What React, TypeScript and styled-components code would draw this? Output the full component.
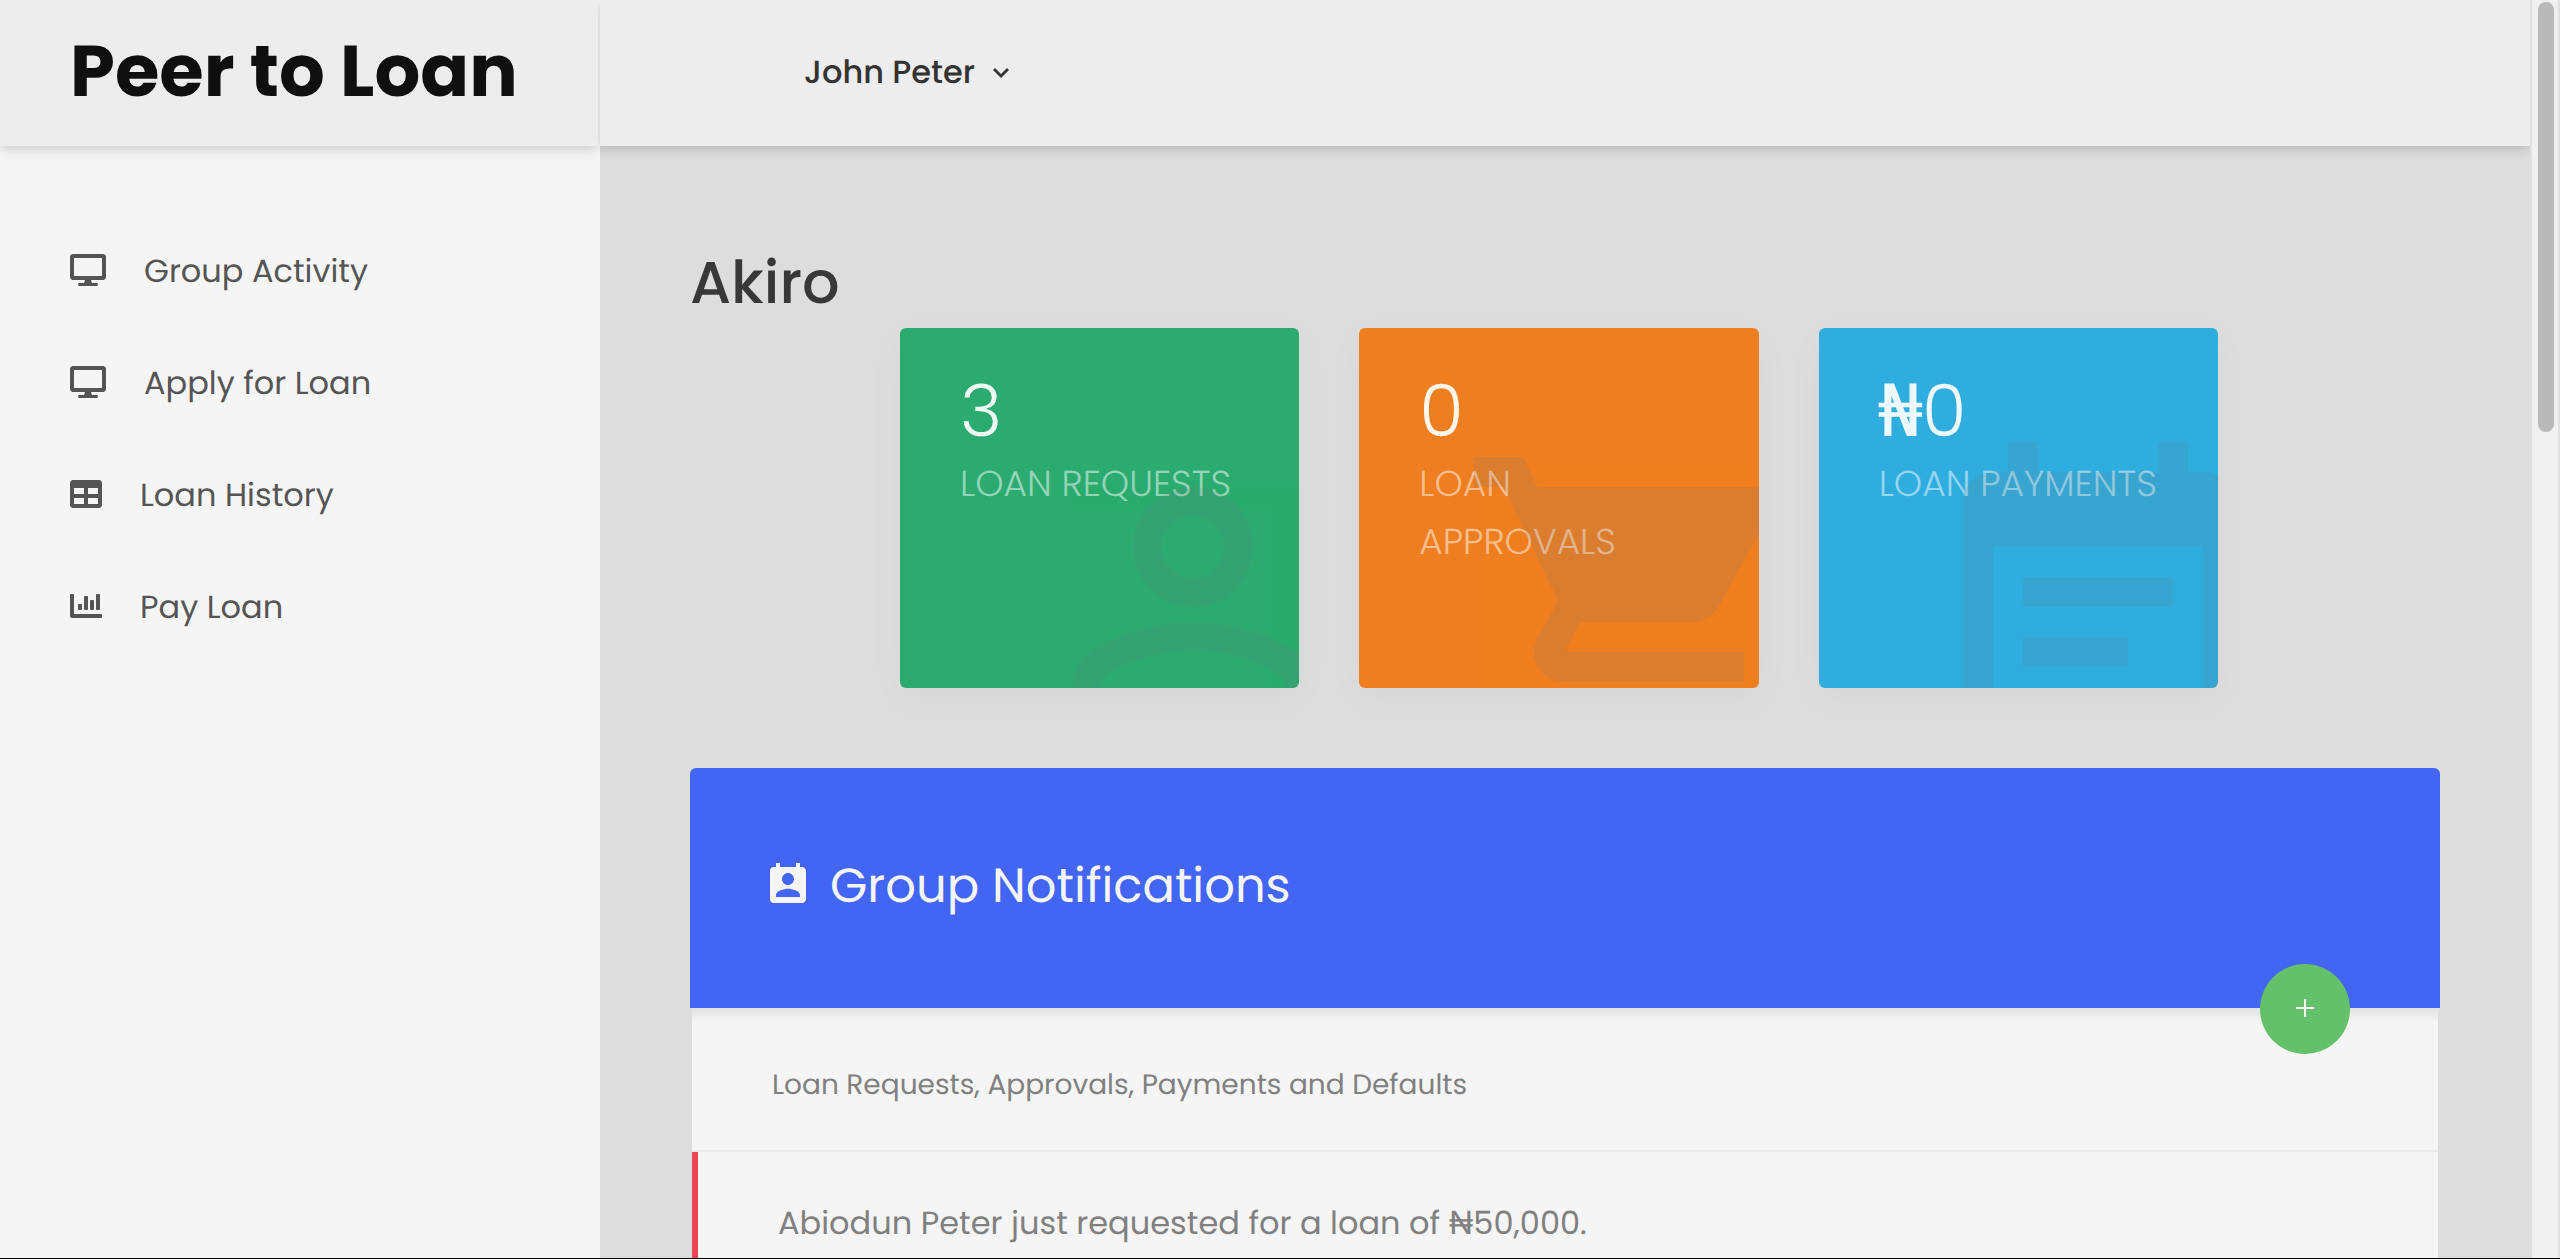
import React from "react";
import styled, { createGlobalStyle } from "styled-components";
import type { IconType } from "react-icons";
import { FaChartBar, FaDesktop, FaTable } from "react-icons/fa";
import {
  MdEventNote,
  MdPermContactCalendar,
  MdPersonOutline,
  MdShoppingCart,
} from "react-icons/md";

const GlobalStyle = createGlobalStyle`
  *, *::before, *::after { box-sizing: border-box; }
  body {
    margin: 0;
    background: #dddddd;
    color: #808080;
    font-family: Poppins, Inter, "Liberation Sans", sans-serif;
    font-size: 32px;
    text-rendering: geometricPrecision;
  }
  h1, h2, p, ul { margin: 0; padding: 0; }
`;

const Shell = styled.div`
  display: grid;
  grid-template-columns: 600px minmax(0, 1fr) 30px;
  height: 100vh;
  overflow: hidden;
  border-bottom: 1px solid #000;
`;

const Sidebar = styled.aside`
  background: #f5f5f5;
`;

const Brand = styled.div`
  display: flex;
  align-items: center;
  height: 146px;
  padding: 0 0 2px 70px;
  margin-right: 2px;
  background: #ededed;
  box-shadow: 0 2px 12px rgba(0, 0, 0, 0.2);
`;

const BrandName = styled.a`
  color: #0f0f0f;
  font-size: 72px;
  font-weight: 700;
  line-height: 88px;
  text-decoration: none;
  white-space: nowrap;
`;

const NavList = styled.ul`
  list-style: none;
  padding-top: 68px;
`;

const NavLink = styled.a<{ $iconWidth: number }>`
  display: flex;
  align-items: center;
  gap: 38px;
  height: 112px;
  padding-left: 70px;
  color: #555555;
  text-decoration: none;
  white-space: nowrap;

  svg {
    width: ${(p) => p.$iconWidth}px;
    height: 32px;
  }
`;

const NavLabel = styled.span`
  padding-top: 4px;
`;

const Column = styled.div`
  display: flex;
  flex-direction: column;
  min-width: 0;
`;

const TopBar = styled.header`
  display: flex;
  flex: none;
  align-items: center;
  height: 146px;
  padding: 0 0 0 204px;
  background: #ededed;
  box-shadow: 0 2px 12px rgba(0, 0, 0, 0.2);
  clip-path: inset(0 0 -20px 0);
`;

const UserButton = styled.button`
  display: flex;
  align-items: center;
  gap: 18px;
  padding: 0;
  border: 0;
  background: none;
  color: #333333;
  font: inherit;
  font-weight: 500;
  text-rendering: inherit;
`;

const Main = styled.main`
  flex: 1;
  min-height: 0;
  padding: 92px 90px 0;
  overflow: hidden;
`;

const PageTitle = styled.h1`
  color: #383838;
  font-size: 59px;
  font-weight: 500;
  line-height: 90px;
`;

const Stats = styled.section`
  display: grid;
  grid-template-columns: repeat(3, minmax(0, 1fr));
  gap: 60px;
  padding: 0 222px 0 210px;
`;

const StatCard = styled.article<{ $color: string }>`
  position: relative;
  height: 360px;
  padding: 40px 60px;
  border-radius: 6px;
  background: ${(p) => p.$color};
  box-shadow: 0 10px 40px rgba(0, 0, 0, 0.03);
  font-weight: 300;
`;

const StatValue = styled.p`
  color: rgba(255, 255, 255, 0.92);
  font-size: 72px;
  line-height: 87px;
`;

const Currency = styled.span`
  font-family: "DejaVu Sans Mono", monospace;
`;

const StatLabel = styled.p`
  color: rgba(255, 255, 255, 0.5);
  font-size: 36px;
  line-height: 58px;
  text-transform: uppercase;
`;

const Watermark = styled.div<{ $overhang: number }>`
  position: absolute;
  inset: 0;
  overflow: hidden;
  border-radius: 6px;

  svg {
    position: absolute;
    top: 99px;
    right: -${(p) => p.$overhang}px;
    width: 360px;
    height: 360px;
    color: #6f7780;
    opacity: 0.15;
  }
`;

const Panel = styled.section`
  margin-top: 80px;
`;

const PanelHeader = styled.header`
  position: relative;
  display: flex;
  align-items: center;
  gap: 18px;
  height: 240px;
  padding: 0 74px 6px;
  border-radius: 6px 6px 0 0;
  background: #4265f3;
  color: #f5f5f5;
`;

const PanelTitle = styled.h2`
  padding-top: 2px;
  font-size: 48px;
  font-weight: 400;
  line-height: 60px;
`;

const AddButton = styled.button`
  position: absolute;
  right: 90px;
  bottom: -46px;
  display: flex;
  align-items: center;
  justify-content: center;
  width: 90px;
  height: 90px;
  padding: 0 0 2px;
  border: 0;
  border-radius: 50%;
  background: #64c06a;
  color: #ffffff;
`;

const PanelBody = styled.div`
  margin: 0 2px;
  background: linear-gradient(#e2e2e2, #f5f5f5 14px);
`;

const PanelNote = styled.p`
  padding: 53px 80px 41px;
  border-bottom: 2px solid #e9e9e9;
  font-size: 28px;
  line-height: 48px;
`;

const Notice = styled.p`
  padding: 48px 80px;
  border-left: 6px solid #e54853;
  background: #f5f5f5;
  line-height: 48px;
`;

const ScrollTrack = styled.div`
  padding: 2px 4px 0 6px;
  border: solid #e0e0e0;
  border-width: 0 2px;
  background: #f0f0f0;
`;

const ScrollThumb = styled.div`
  height: 430px;
  border-radius: 8px;
  background: #b9b9b9;
`;

const links: { label: string; Icon: IconType; width: number }[] = [
  { label: "Group Activity", Icon: FaDesktop, width: 36 },
  { label: "Apply for Loan", Icon: FaDesktop, width: 36 },
  { label: "Loan History", Icon: FaTable, width: 32 },
  { label: "Pay Loan", Icon: FaChartBar, width: 32 },
];

const stats: {
  label: string;
  value: string;
  currency?: string;
  color: string;
  Icon: IconType;
  overhang: number;
}[] = [
  { label: "Loan requests", value: "3", color: "#2bab6f", Icon: MdPersonOutline, overhang: 74 },
  { label: "Loan approvals", value: "0", color: "#ef7e20", Icon: MdShoppingCart, overhang: 60 },
  { label: "Loan payments", value: "0", currency: "₦", color: "#2fadde", Icon: MdEventNote, overhang: 60 },
];

export default function App() {
  return (
    <>
      <GlobalStyle />
      <Shell>
        <Sidebar>
          <Brand>
            <BrandName href="#">Peer to Loan</BrandName>
          </Brand>
          <nav>
            <NavList>
              {links.map(({ label, Icon, width }) => (
                <li key={label}>
                  <NavLink href="#" $iconWidth={width}>
                    <Icon aria-hidden />
                    <NavLabel>{label}</NavLabel>
                  </NavLink>
                </li>
              ))}
            </NavList>
          </nav>
        </Sidebar>
        <Column>
          <TopBar>
            <UserButton type="button">
              John Peter
              <svg width="16" height="10" viewBox="0 0 16 10" fill="none" stroke="currentColor" strokeWidth="2.8" aria-hidden>
                <path d="M1 1l7 7 7-7" />
              </svg>
            </UserButton>
          </TopBar>
          <Main>
            <PageTitle>Akiro</PageTitle>
            <Stats>
              {stats.map(({ label, value, currency, color, Icon, overhang }) => (
                <StatCard key={label} $color={color}>
                  <StatValue>
                    {currency && <Currency>{currency}</Currency>}
                    {value}
                  </StatValue>
                  <StatLabel>{label}</StatLabel>
                  <Watermark $overhang={overhang}>
                    <Icon aria-hidden />
                  </Watermark>
                </StatCard>
              ))}
            </Stats>
            <Panel>
              <PanelHeader>
                <MdPermContactCalendar size={48} aria-hidden />
                <PanelTitle>Group Notifications</PanelTitle>
                <AddButton type="button" aria-label="Add notification">
                  <svg width="18" height="18" viewBox="0 0 18 18" stroke="currentColor" strokeWidth="2" aria-hidden>
                    <path d="M9 0v18M0 9h18" />
                  </svg>
                </AddButton>
              </PanelHeader>
              <PanelBody>
                <PanelNote>Loan Requests, Approvals, Payments and Defaults</PanelNote>
                <Notice>Abiodun Peter just requested for a loan of ₦50,000.</Notice>
              </PanelBody>
            </Panel>
          </Main>
        </Column>
        <ScrollTrack aria-hidden>
          <ScrollThumb />
        </ScrollTrack>
      </Shell>
    </>
  );
}
